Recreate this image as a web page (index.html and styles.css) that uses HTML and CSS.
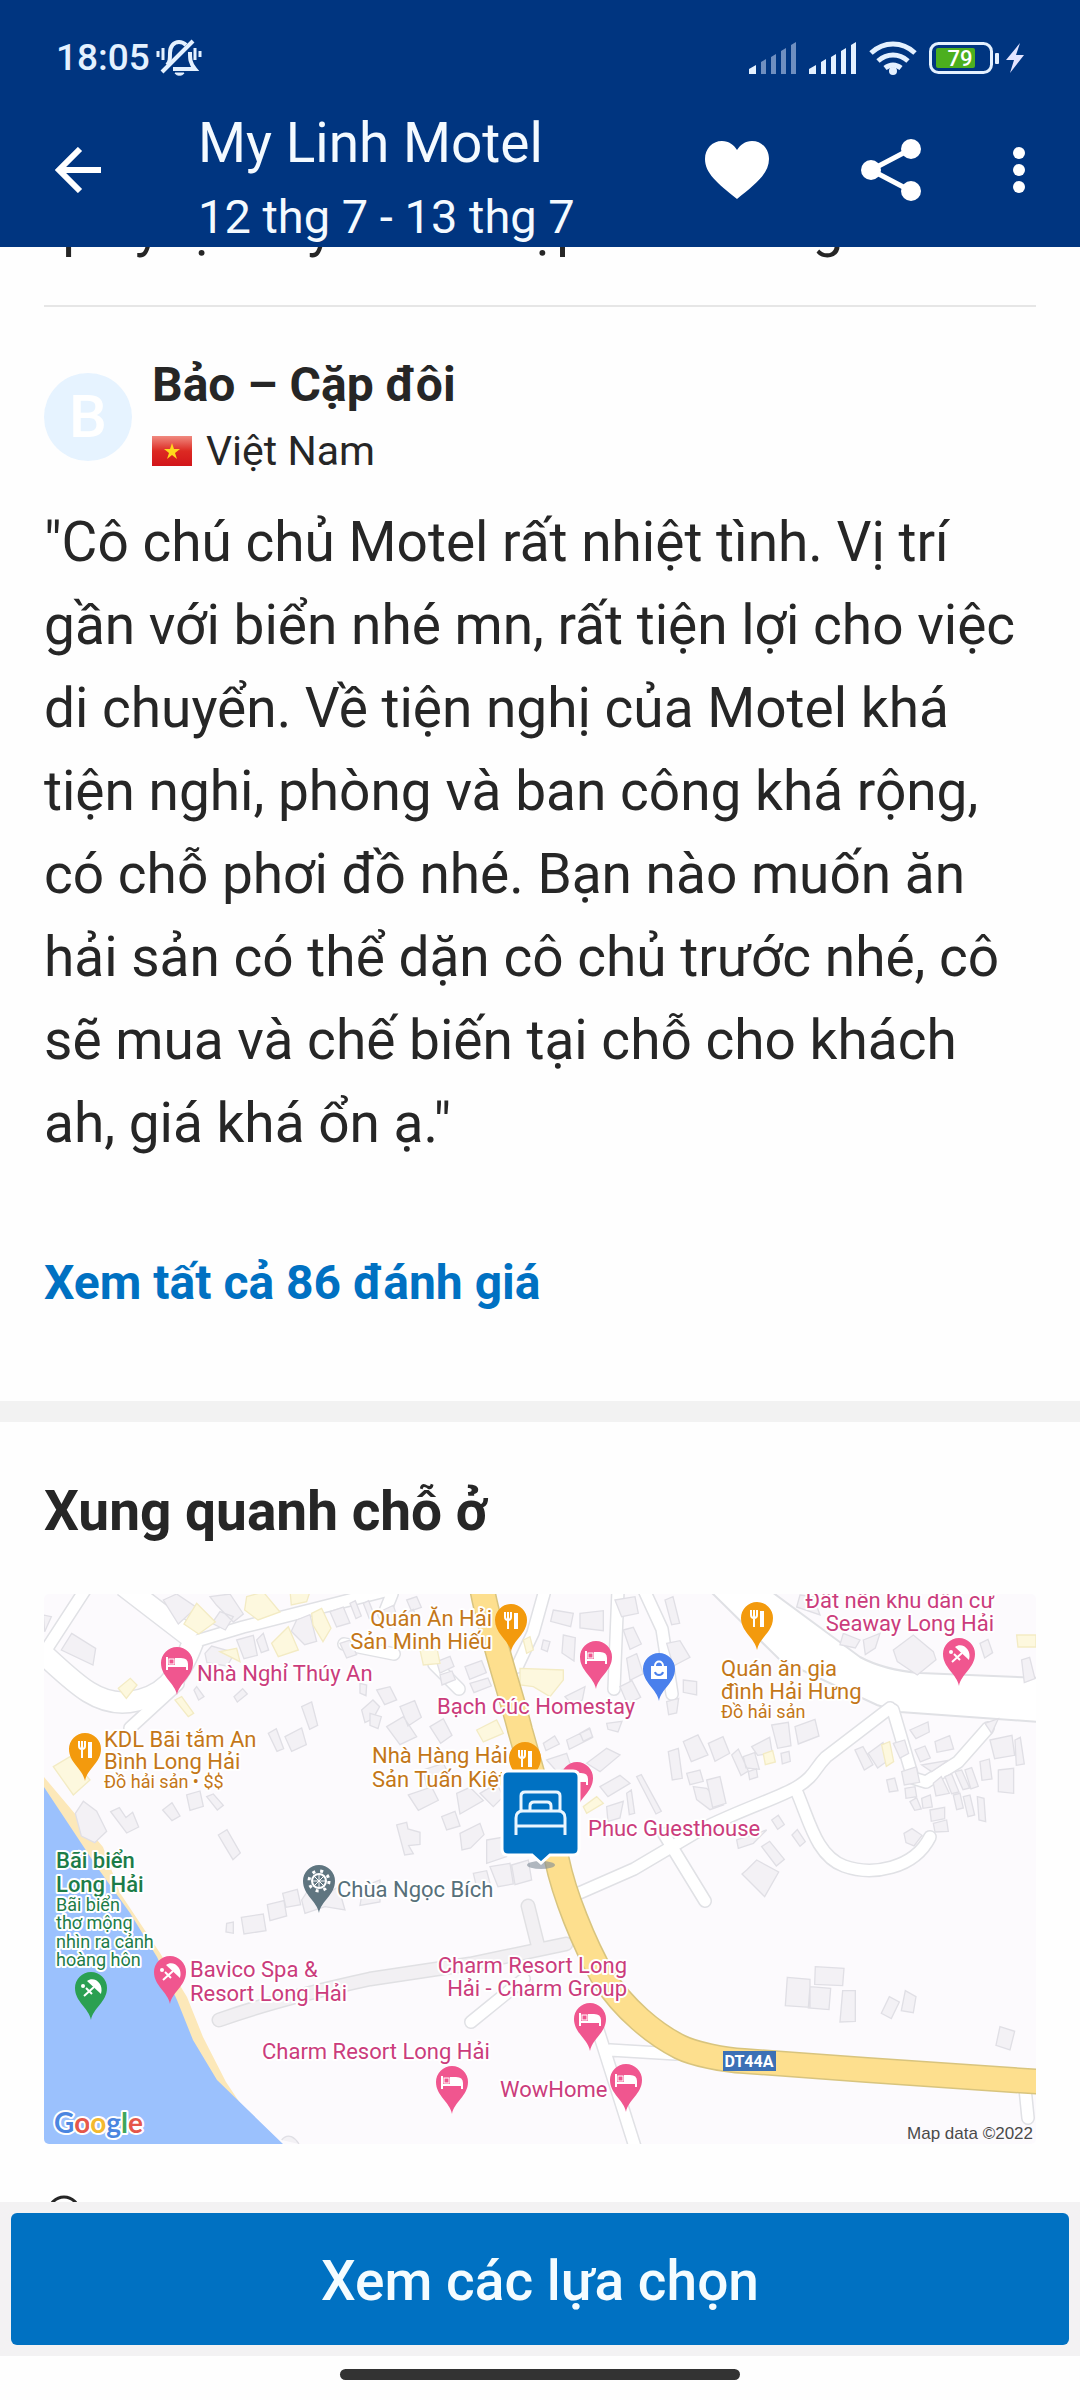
FILE: index.html
```html
<!DOCTYPE html>
<html lang="vi">
<head>
  <meta charset="UTF-8">
  <meta name="viewport" content="width=device-width, initial-scale=1.0">
  <title>My Linh Motel</title>
  <link rel="stylesheet" href="styles.css">
</head>
<body>
  <header class="header">
    <div class="status">
      <div class="status-left">
        <span class="clock">18:05</span>
        <svg class="bell" viewBox="0 0 46 40" width="46" height="40" fill="none" stroke="#e4f1ff" stroke-width="4">
          <path d="M11 27c3-3 3-6 3-12 0-7 4-11 9-11 3 0 5 1 7 3M34 14c0 7 0 11 5 17H17"/>
          <path d="M6 34L37 3"/>
          <path d="M19 35h9c-1 3-8 3-9 0z" fill="#e4f1ff" stroke-width="1"/>
          <path d="M2 13v6M7 10v12M39 10v12M44 13v6" stroke-width="3"/>
        </svg>
      </div>
      <div class="status-right">
        <svg viewBox="0 0 48 32" width="48" height="32" fill="#6f8fc0">
          <path d="M0 32v-5l7-4v9z" fill="#e4f1ff"/>
          <path d="M12 32V20l5-3v15zM22 32V15l5-3v20zM32 32V9l5-3v26zM42 32V3l5-3v32z"/>
        </svg>
        <svg viewBox="0 0 48 32" width="48" height="32" fill="#e4f1ff">
          <path d="M0 32v-5l7-4v9zM12 32V20l5-3v15zM22 32V15l5-3v20zM32 32V9l5-3v26zM42 32V3l5-3v32z"/>
        </svg>
        <svg viewBox="0 0 48 34" width="48" height="34" fill="none" stroke="#e4f1ff" stroke-width="5">
          <path d="M2 12C15 0 33 0 46 12M9 20c9-8 21-8 30 0M16 27c5-4 11-4 16 0"/>
          <circle cx="24" cy="30" r="4" fill="#e4f1ff" stroke="none"/>
        </svg>
        <svg class="battery" viewBox="0 0 70 32" width="70" height="32">
          <rect x="1.500" y="1.500" width="61" height="29" rx="8" fill="none" stroke="#e4f1ff" stroke-width="3"/>
          <rect x="7" y="6" width="39" height="20" rx="2" fill="#4caf1e"/>
          <rect x="66" y="11" width="4" height="11" rx="1" fill="#e4f1ff"/>
          <text x="31" y="24" text-anchor="middle" class="battery-text">79</text>
        </svg>
        <svg viewBox="0 0 18 30" width="18" height="30"><path d="M14 0L0 17h8L4 30 18 12h-8z" fill="#e4e4ff"/></svg>
      </div>
    </div>

    <div class="toolbar">
      <button class="icon-btn back" aria-label="Quay lại">
        <svg viewBox="0 0 46 46" width="46" height="46" fill="none" stroke="#fff" stroke-width="6"><path d="M25 2L4 23l21 21M4 23h42"/></svg>
      </button>
      <div class="titles">
        <h1>My Linh Motel</h1>
        <p>12 thg 7 - 13 thg 7</p>
      </div>
      <div class="actions">
        <button class="icon-btn" aria-label="Yêu thích">
          <svg viewBox="0 0 64 58" width="64" height="58"><path d="M32 58C12 42 0 32 0 18 0 8 7 0 17 0c7 0 12 4 15 9C35 4 40 0 47 0c10 0 17 8 17 18 0 14-12 24-32 40z" fill="#fff"/></svg>
        </button>
        <button class="icon-btn" aria-label="Chia sẻ">
          <svg viewBox="0 0 60 62" width="60" height="62" fill="#fff"><path d="M50 10L10 31l40 21" fill="none" stroke="#fff" stroke-width="5"/><circle cx="50" cy="10" r="10"/><circle cx="10" cy="31" r="10"/><circle cx="50" cy="52" r="10"/></svg>
        </button>
        <button class="icon-btn" aria-label="Thêm">
          <svg viewBox="0 0 12 46" width="12" height="46" fill="#fff"><circle cx="6" cy="6" r="6"/><circle cx="6" cy="23" r="6"/><circle cx="6" cy="40" r="6"/></svg>
        </button>
      </div>
    </div>
  </header>

  <main class="content">
    <section class="reviews">
      <p class="review-text previous">quay lại đây nhiều đẹp mà không</p>
      <hr>
      <div class="reviewer">
        <div class="avatar">B</div>
        <div>
          <h2 class="name">Bảo – Cặp đôi</h2>
          <div class="country">
            <svg viewBox="0 0 40 30" width="40" height="30">
              <defs><linearGradient id="flag" x2="0" y2="1"><stop offset="0" stop-color="#f08a80"/><stop offset="0.500" stop-color="#dc2a22"/><stop offset="1" stop-color="#d2141a"/></linearGradient></defs>
              <rect width="40" height="30" fill="url(#flag)"/>
              <path d="M20 7l2 6h6l-5 4 2 6-5-4-5 4 2-6-5-4h6z" fill="#ffd91c"/>
            </svg>
            <span>Việt Nam</span>
          </div>
        </div>
      </div>
      <p class="review-text">"Cô chú chủ Motel rất nhiệt tình. Vị trí gần với biển nhé mn, rất tiện lợi cho việc di chuyển. Về tiện nghị của Motel khá tiện nghi, phòng và ban công khá rộng, có chỗ phơi đồ nhé. Bạn nào muốn ăn hải sản có thể dặn cô chủ trước nhé, cô sẽ mua và chế biến tại chỗ cho khách ah, giá khá ổn ạ."</p>
      <a class="all-reviews" href="#">Xem tất cả 86 đánh giá</a>
    </section>

    <section class="around">
      <h2 class="around-title">Xung quanh chỗ ở</h2>
      <svg class="map" viewBox="0 0 992 550">
        <defs>
          <g id="wide">
            <path d="M80-8L149 45M149 48C135 85 118 104 85 108S30 88-5 56"/>
          </g>
          <g id="streets">
            <path d="M149 48L199 33 286 11 345-4M41-4L2 56M134 90L86 134"/>
            <path d="M501-4L489 39 473 73M574-4L570 95M600-4L618 35 628 100"/>
            <path d="M533 300L590 275 656 236C700 214 735 204 753 193S770 175 782 163L846 114"/>
            <path d="M752 196C765 225 772 262 800 272S870 275 886 243"/>
            <path d="M849 116L869 184 882 188 914 168 944 134"/>
            <path d="M620 240L661 307M480 385L427 428M554 436L592 556M566 456L632 460M981 494L984 524"/>
            <path d="M390 70L415 95M348 0L340 20M300 50L350 60"/>
          </g>
          <path id="highway" d="M438-6C445 35 470 110 476 136L513 266C520 300 540 350 559 383 580 415 610 440 636 453 650 460 680 466 700 467L823 476 998 488"/>
          <path id="pin" d="M0 32C-2 20-16 14-16 0A16 16 0 0 1 16 0C16 14 2 20 0 32z"/>
          <g id="bed"><path d="M-10-6v13M10 7v-6c0-4-3-5-6-5h-5v6M-10 3h20" fill="none" stroke="#fff" stroke-width="2"/><path d="M-1-4h6c3 0 5 2 5 5v2H-1z" fill="#fff"/><rect x="-8" y="-4" width="5" height="5" fill="none" stroke="#fff"/></g>
          <g id="food" fill="none" stroke="#fff" stroke-width="2"><path d="M-6-8v5c0 4 6 4 6 0v-5M-3-8V9"/><path d="M5 9V-7" stroke-width="4"/></g>
          <g id="umbrella" fill="#fff"><path d="M-4-7C3-12 13-5 10 6z"/><path d="M3-1L-7 8M-5 0l6 6" fill="none" stroke="#fff" stroke-width="2"/><circle cx="-8" cy="-2" r="2"/></g>
        </defs>

        <rect width="992" height="550" fill="#fcfafd"/>

        <!-- biển và bãi cát -->
        <path d="M0 183L59 253 76 299 116 359 143 403 159 443 182 488 200 515 100 500 0 250z" fill="#fce8b9"/>
        <path d="M0 193L53 273 86 319 113 363 133 406 149 446 173 486 239 550H0z" fill="#9bc1fd"/>

        <path class="avenue" d="M728-2L816 63Q840 76 876 79L996 84V128L856 118 833 111 736 66 667-2z"/>
        <path class="strip-line" d="M522 350L426 370 326 385 C280 395 220 410 175 426M484 312L494 352"/>
        <path class="strip" d="M522 350L426 370 326 385 C280 395 220 410 175 426M484 312L494 352"/>
        <use href="#wide" class="wide-line"/><use href="#streets" class="street-line"/>
        <use href="#wide" class="wide"/><use href="#streets" class="street"/>

        <!-- nhà cửa -->
        <g class="house" transform="translate(-14 -14) scale(.3333)">
          <path d="M125 160l72 45-8 50-95-45zM40 105l24 5-20 45zM400 60l40-18 60 40-55 50zM540 50l60-8 40 60-30 24-50-50zM570 95l40 15-24 40-40-20zM620 180l50-14 12 60-40 10zM680 180l20-20 16 50-22 8zM800 120l40-16 20 80-36 10-40-40zM900 95l40-14 20 48-40 12zM960 70l16-8 18 46-16 8zM1000 70l16-8 18 46-16 8zM930 190l30-10 20 44-30 10zM525 220l20-22 70 20-24 40-60-10zM500 320l22 30-16 10-14-30zM612 350l26-24 14 16-30 24z"/>
          <path d="M815 380l30-14 18 70-24 12zM715 460l24-14 22 60-20 8zM765 470l50-26 14 50-44 20zM990 310l20 5-2 32-18-8zM995 390l34-30 20 20-20 36-24 12zM470 645l40-12 10 46-40 12zM530 650l20-8 30 34-18 14zM398 690l28-22 24 40-24 14zM242 695l26-12 20 30 20-16 18 44-36 18zM136 700l24-36 40 30 30 60-36 34-40-20zM565 765l26-16 40 70-22 20-24-40z"/>
        </g>
        <g class="house" transform="translate(326 -14) scale(.3333)">
          <path d="M550 90l60 10-8 40-60-16zM630 100l70-8v60l-70-8zM580 165l36 8-4 70-36-24zM520 180l20 5-8 30-18-8zM735 60l60-10 10 50-50 10zM760 150l30-8 24 50-34 16zM770 235l30-14 20 60-40 20zM750 320l36-18 26 50-40 20zM885 60l24-10 20 80-24 4zM890 190l40-8 30 50-50 26zM940 300l40 5v40l-40-8zM890 365l36-10-6 44-24 5zM200 245l40-16 12 30-42 20zM210 285l36-12 10 26-40 16zM285 260l50-18 14 36-50 20zM300 310l54-16 10 24-52 20zM90 380l44-18 20 50-40 26zM50 440l50-30 40 60-50 24zM180 440l40-24 26 50-34 24zM40 90l30-14 20 60-30 8zM100 100l30-12 16 40-34 12zM110 60l30-10 14 32-30 10zM20 330l40-10 20 40-36 14z"/>
          <path d="M0 400l34 10-10 36-24-10zM585 350l60-30-8 40-30 14zM520 490l34-22 14 24-40 20zM530 540l60-20 12 36-40 20zM590 480l70-34 8 26-70 36zM710 430l46-6-12 32-30-8zM650 550l60-45 40 20-60 50zM690 620l60-34 30 24-66 40zM710 680l50-16-10 50-36 10zM770 640l14-10 10 70-16 4zM800 590l14-6 60 110-16 8zM630 460l28-16 10 26-28 14z"/>
          <path d="M895 515l30-10 12 90-30 5zM940 485l44-20 30 60-50 20zM1020 490l30-10v40l-24-4zM950 580l40-10 10 34-40 10zM970 620l40 5 50 50-40 14-40-30zM80 735l30-8 4 20 36 10v36l-34 4 14 24-26 4zM115 645l70-24 20 40-60 30zM160 570l60-20 20 40-70 30zM215 710l40-16 15 44-40 12zM270 760l60-30 12 34-40 40-26 6zM260 640l40-18 40 40-70 40zM330 640l50-30 20 40-30 30zM350 780l60-10v60l-60 20z"/>
        </g>
        <g class="house" transform="translate(656 -14) scale(.3333)">
          <path d="M300 45l40 5 20 55-70-24zM430 160l50 20-14 24-46-10zM490 180l50-20-14 44-30 20zM580 210l60-45 60 50 8 24-56 46-60-40zM840 190l24-12 14 40-24 16zM965 240l24-8 16 64-32 12zM25 490l44-20 20 50-44 24zM95 525l20-18 30 66-22 14zM130 530l34-12 14 50-40-4zM155 500l54-28 8 48-44 6zM215 435l50-8 8 70-40 8zM285 440l60-22 12 50-62 24zM243 520l24-6 4 30-24 8zM145 575l24-8 4 24-24 8zM20 600l40-10 18 80-40 12zM465 510l24-10 30 54-26 16zM505 520l44-32 20 50-36 26zM580 490l34-10 12 40-26 14zM560 600l24-6 10 38-26 4z"/>
          <path d="M630 450l54-24 4 30-40 20zM645 510l30-12 16 36-30 12zM705 485l44-18 12 40-50 10zM605 575l44-14 10 46-46 8zM665 555l80-14-50 34zM615 625l30-5 5 30-32 5zM700 610l24-20 24 50-40 8zM735 590l20-8 22 54-22 5zM765 575l20-5 24 54-20 5zM795 570l20-7 20 56-22 8zM840 545l28-8 8 60-30 4zM870 480l66-14 8 60-60 10zM945 480l16-8 12 80-24 4zM895 570l46-5v75l-46-5zM630 665l20-12 14 34-20 4zM665 655l26-10 6 36-28 4zM690 690l44-8v34l-40 8zM700 730l40-10 5 34-40 2zM760 645l20-5 10 44-20 5zM790 650l20-5 14 60-20 5zM832 650l20 5 5 70-20-5zM612 760l24-14 30 20-24 32-24-10zM855 430l40-14-20 44zM215 720l20-14 18 28-20 14zM276 765l16-16 24 36-16 14zM185 800l24-16 44 54-24 20zM110 780l90-30-40 40-45 15z"/>
        </g>
        <g class="house" transform="translate(-14 266) scale(.3333)">
          <path d="M590 190l20-4v34l-22-4zM634 172l66-10 8 50-66 10zM712 134l50-12 8 46-50 14zM758 100l44-12 10 46-44 8zM815 120l20-30 60 10 30-20 20 70-60-10-60 20zM1000 80l50-20v66l-60 10z"/>
          <path d="M755 840c20-24 40-6 52 12"/>
        </g>
        <g class="house" transform="translate(326 266) scale(.3333)">
          <path d="M310 40l40-8 10 38-40 12zM360 20l60-10 10 62-46 8zM425 15l50-15 10 60-50 14z"/>
        </g>
        <g class="house" transform="translate(656 266) scale(.3333)">
          <path d="M140 30l30-30 66 36-42 74-68-68zM262 352l68 6v84l-74-5zM330 380l62 5-5 64-62-5zM346 320l86 5-4 52-84-4zM428 392h38v92l-46 2zM568 410l30 16-24 50-30-16zM616 392l32 18-8 48-36-6zM900 500l44 14-14 56-42-14z"/>
        </g>
        <g class="shop" transform="translate(-14 -14) scale(.3333)">
          <path d="M500 70l56 56-50 36-44-30zM650 50l50-14 50 60-66 24-40-30zM780 30l60 5-10 30-46 10zM725 190l50-50 30 70-60 20zM570 215l50-10 10 40zM845 100l30-15 28 60-24 40-30-50zM265 325l36-30 20 20-32 40zM435 360l20-10 36 50-16 10zM70 560l50-30 60 70-50 45z"/>
        </g>
        <g class="shop" transform="translate(326 -14) scale(.3333)">
          <path d="M450 265l130 5v30l-40 50-50-30-40-5zM320 450l60-30 20 40-60 26zM150 210l50-10 10 50-50 5zM640 680l40-30 20 20-50 30zM460 180l20-10 10 40-20 10z"/>
        </g>
        <g class="shop" transform="translate(656 -14) scale(.3333)">
          <path d="M950 165h58v36h-54zM545 495l24-10 12 60-22 14zM190 522l28-10 8 34-30 8z"/>
        </g>

        <use href="#highway" class="highway-line"/><use href="#highway" class="highway"/>
        <rect x="679" y="457" width="53" height="20" fill="#3c70b5"/>
        <text x="705" y="473" text-anchor="middle" class="road-no">DT44A</text>

        <!-- điểm ghim -->
        <g class="pin-hotel">
          <g transform="translate(133 69)"><use href="#pin"/><use href="#bed"/></g>
          <g transform="translate(552 63)"><use href="#pin"/><use href="#bed"/></g>
          <g transform="translate(533 184)"><use href="#pin"/><use href="#bed"/></g>
          <g transform="translate(546 425)"><use href="#pin"/><use href="#bed"/></g>
          <g transform="translate(408 488)"><use href="#pin"/><use href="#bed"/></g>
          <g transform="translate(582 486)"><use href="#pin"/><use href="#bed"/></g>
          <g transform="translate(915 60)"><use href="#pin"/><use href="#umbrella"/></g>
          <g transform="translate(126 378)"><use href="#pin"/><use href="#umbrella"/></g>
        </g>
        <g class="pin-food">
          <g transform="translate(41 155)"><use href="#pin"/><use href="#food"/></g>
          <g transform="translate(467 26)"><use href="#pin"/><use href="#food"/></g>
          <g transform="translate(481 164)"><use href="#pin"/><use href="#food"/></g>
          <g transform="translate(713 24)"><use href="#pin"/><use href="#food"/></g>
        </g>
        <g class="pin-beach" transform="translate(47 394)"><use href="#pin"/><use href="#umbrella"/></g>
        <g class="pin-shop" transform="translate(615 75)"><use href="#pin"/><path d="M-8-3H8V10H-8z" fill="#fff"/><path d="M-4-3c0-6 8-6 8 0" fill="none" stroke="#fff" stroke-width="2"/><path d="M-4 3c1 4 7 4 8 0" fill="none" stroke="#4a80ec" stroke-width="2"/></g>
        <g class="pin-temple" transform="translate(275 287)"><use href="#pin"/><circle r="7" fill="none" stroke="#fff" stroke-width="2"/><circle r="10" fill="none" stroke="#fff" stroke-width="3" stroke-dasharray="3 5"/><path d="M-7 0H7M0-7V7M-5-5L5 5M5-5L-5 5" stroke="#fff" stroke-width="1"/></g>

        <g class="label hotel">
          <text x="153" y="87">Nhà Nghỉ Thúy An</text>
          <text x="393" y="120">Bạch Cúc Homestay</text>
          <text x="544" y="242">Phuc Guesthouse</text>
          <text x="950" y="14" text-anchor="end">Đất nền khu dân cư</text>
          <text x="950" y="37" text-anchor="end">Seaway Long Hải</text>
          <text x="146" y="383">Bavico Spa &amp;</text>
          <text x="146" y="407">Resort Long Hải</text>
          <text x="583" y="379" text-anchor="end">Charm Resort Long</text>
          <text x="583" y="402" text-anchor="end">Hải - Charm Group</text>
          <text x="218" y="465">Charm Resort Long Hải</text>
          <text x="456" y="503">WowHome</text>
        </g>
        <g class="label food">
          <text x="60" y="153">KDL Bãi tắm An</text>
          <text x="60" y="175">Bình Long Hải</text>
          <text x="60" y="194" class="small">Đồ hải sản • $$</text>
          <text x="448" y="32" text-anchor="end">Quán Ăn Hải</text>
          <text x="448" y="55" text-anchor="end">Sản Minh Hiếu</text>
          <text x="328" y="169">Nhà Hàng Hải</text>
          <text x="328" y="193">Sản Tuấn Kiệt</text>
          <text x="677" y="82">Quán ăn gia</text>
          <text x="677" y="105">đình Hải Hưng</text>
          <text x="677" y="124" class="small">Đồ hải sản</text>
        </g>
        <g class="label beach">
          <text x="12" y="274" class="strong">Bãi biển</text>
          <text x="12" y="298" class="strong">Long Hải</text>
          <text x="12" y="317" class="small">Bãi biển</text>
          <text x="12" y="335" class="small">thơ mộng</text>
          <text x="12" y="354" class="small">nhìn ra cảnh</text>
          <text x="12" y="372" class="small">hoàng hôn</text>
        </g>
        <g class="label temple"><text x="293" y="303">Chùa Ngọc Bích</text></g>

        <!-- vị trí chỗ nghỉ -->
        <ellipse cx="497" cy="271" rx="14" ry="4" fill="#7d8a96" opacity="0.600"/>
        <path d="M464 177h65q6 0 6 6v72q0 6-6 6h-23l-9 8-9-8h-24q-6 0-6-6v-72q0-6 6-6z" fill="#0071c2" stroke="#fff" stroke-width="3"/>
        <path d="M477 217v-15q0-4 4-4h31q4 0 4 4v15M486 216v-4q0-4 4-4h13q4 0 4 4v4M472 241v-17q0-7 7-7h35q7 0 7 7v17M472 232h49" fill="none" stroke="#e9f6ff" stroke-width="3"/>

        <text x="10" y="539" class="google"><tspan fill="#4b86e0">G</tspan><tspan fill="#e5574b">o</tspan><tspan fill="#f3b92f">o</tspan><tspan fill="#4b86e0">g</tspan><tspan fill="#3fa65a">l</tspan><tspan fill="#e5574b">e</tspan></text>
        <text x="989" y="545" text-anchor="end" class="credit">Map data ©2022</text>
      </svg>
      <svg class="place-icon" viewBox="0 0 40 40" width="40" height="40" fill="none" stroke="#262626" stroke-width="3"><circle cx="20" cy="17" r="15"/></svg>
    </section>
  </main>

  <footer class="footer">
    <div class="cta-bar"><button class="cta">Xem các lựa chọn</button></div>
    <div class="home-bar"></div>
  </footer>
</body>
</html>
```
FILE: styles.css
```css
* {
  box-sizing: border-box;
}
body {
  margin: 0;
  height: 100vh;
  display: flex;
  flex-direction: column;
  font-family: Roboto, "Noto Sans", sans-serif;
  color: #262626;
  background-color: #fefefe;
}
h1, h2, p {
  margin: 0;
}
svg {
  display: block;
  flex-shrink: 0;
}
.header {
  background-color: #003580;
  color: #f4faff;
  height: 247px;
  flex-shrink: 0;
  position: relative;
  z-index: 10;
}
.status {
  display: flex;
  justify-content: space-between;
  align-items: center;
  padding: 38px 56px 0;
  height: 78px;
}
.status-left {
  display: flex;
  align-items: center;
  gap: 6px;
}
.clock {
  font-size: 37px;
  line-height: 44px;
  font-weight: 500;
  color: #e4f1ff;
}
.status-right {
  display: flex;
  align-items: center;
  gap: 12px;
}
.battery {
  margin-right: -5px;
}
.battery-text {
  font-size: 22px;
  font-weight: 500;
  fill: #fff;
}
.toolbar {
  display: flex;
  align-items: center;
  padding: 33px 55px 0;
}
.icon-btn {
  border: none;
  background: none;
  padding: 0;
  cursor: pointer;
}
.back, .actions {
  margin-bottom: 18px;
}
.titles {
  flex: 1;
  margin-left: 97px;
}
.titles h1 {
  font-size: 55px;
  line-height: 64px;
  font-weight: 400;
}
.titles p {
  margin-top: 12px;
  font-size: 47px;
  line-height: 60px;
}
.actions {
  display: flex;
  align-items: center;
  gap: 92px;
}
.content {
  flex: 1;
  min-height: 0;
  overflow: hidden;
}
.reviews {
  padding: 0 44px 88px;
  border-bottom: 21px solid #f2f2f2;
}
.reviews hr {
  border: none;
  height: 2px;
  margin: 36px 0 0;
  background-color: #e6e6e6;
}
.review-text {
  font-size: 55px;
  line-height: 83px;
}
.previous {
  margin-top: -61px;
  white-space: nowrap;
}
.reviewer {
  display: flex;
  align-items: center;
  gap: 20px;
  padding: 44px 0 18px;
}
.avatar {
  width: 88px;
  height: 88px;
  border-radius: 50%;
  background-color: #e6f3ff;
  color: #fff;
  font-size: 60px;
  line-height: 88px;
  font-weight: 500;
  text-align: center;
}
.name {
  font-size: 48px;
  line-height: 68px;
  font-weight: 700;
}
.country {
  display: flex;
  align-items: center;
  gap: 14px;
  font-size: 41px;
  line-height: 64px;
}
.all-reviews {
  display: block;
  margin-top: 88px;
  color: #0071c2;
  font-size: 48px;
  line-height: 60px;
  font-weight: 700;
  text-decoration: none;
}
.around {
  padding: 51px 44px 0;
}
.around-title {
  font-size: 55px;
  line-height: 76px;
  font-weight: 700;
}
.map {
  width: 100%;
  height: auto;
  margin-top: 45px;
  border-radius: 5px;
}
.place-icon {
  margin-top: 51px;
}

/* bản đồ */
.wide-line, .wide, .street-line, .street, .strip-line, .strip, .highway-line, .highway {
  fill: none;
  stroke-linejoin: round;
}
.wide-line { stroke: #e0e1e5; stroke-width: 23px; }
.wide { stroke: #fff; stroke-width: 20px; }
.street-line { stroke: #e0e1e5; stroke-width: 14px; stroke-linecap: round; }
.street { stroke: #fff; stroke-width: 11px; stroke-linecap: round; }
.strip-line { stroke: #e0e0e3; stroke-width: 15px; stroke-linecap: round; }
.strip { stroke: #f2f0f3; stroke-width: 12px; stroke-linecap: round; }
.highway-line { stroke: #d8c47e; stroke-width: 26px; }
.highway { stroke: #fddf8e; stroke-width: 23px; }
.avenue {
  fill: #fff;
  stroke: #e0e1e5;
  stroke-width: 2px;
}
.house {
  fill: #f3f1f5;
  stroke: #e0dfe5;
  stroke-width: 4px;
}
.shop {
  fill: #fdf8de;
  stroke: #f3ebc4;
  stroke-width: 4px;
}
.pin-hotel { fill: #f0568f; }
.pin-food { fill: #f39a0d; }
.pin-beach { fill: #2ba052; }
.pin-shop { fill: #4a80ec; }
.pin-temple { fill: #5f7580; }
.label {
  font-size: 22px;
  stroke: #fff;
  stroke-width: 4px;
  stroke-linejoin: round;
  paint-order: stroke;
}
.small { font-size: 18px; }
.strong { font-weight: 500; }
.hotel { fill: #cb3c7c; }
.food { fill: #c47718; }
.beach { fill: #1c7c48; }
.temple { fill: #57707a; }
.road-no {
  font-size: 16px;
  font-weight: 700;
  fill: #fff;
}
.google {
  font-family: Lato, sans-serif;
  font-size: 28px;
  font-weight: 700;
  stroke: #fff;
  stroke-width: 4px;
  stroke-linejoin: round;
  paint-order: stroke;
}
.credit {
  font-family: "Liberation Sans", Arial, sans-serif;
  font-size: 17px;
  fill: #4a4a4a;
}

.footer {
  flex-shrink: 0;
}
.cta-bar {
  background-color: #f3f2f3;
  padding: 11px;
}
.cta {
  width: 100%;
  height: 132px;
  padding: 4px 0 0;
  border: none;
  border-radius: 6px;
  background-color: #0071c2;
  color: #f4fcff;
  font-family: inherit;
  font-size: 55px;
  font-weight: 500;
  cursor: pointer;
}
.home-bar {
  width: 37%;
  height: 11px;
  margin: 13px auto 20px;
  border-radius: 6px;
  background-color: #333;
}
```
